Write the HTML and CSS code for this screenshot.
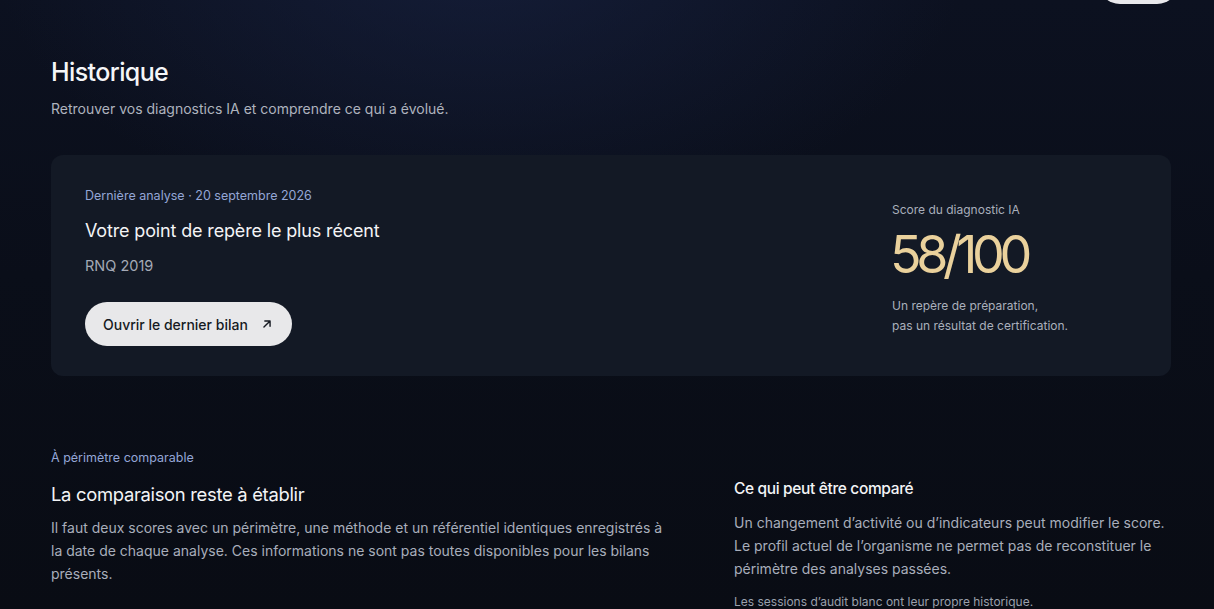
FILE: index.html
```html
<!DOCTYPE html>
<html lang="fr">
<head>
<meta charset="utf-8">
<title>Historique</title>
<link rel="stylesheet" href="styles.css">
</head>
<body>
<div class="page">
  <header class="topbar">
    <button class="top-btn" type="button" aria-label="Compte"></button>
  </header>
  <main class="wrap">
    <section class="intro">
      <h1 class="title">Historique</h1>
      <p class="subtitle">Retrouver vos diagnostics IA et comprendre ce qui a évolué.</p>
    </section>

    <section class="card">
      <div class="card-main">
        <p class="eyebrow">Dernière analyse · 20 septembre 2026</p>
        <h2 class="card-title">Votre point de repère le plus récent</h2>
        <p class="card-ref">RNQ 2019</p>
        <a class="btn" href="#">Ouvrir le dernier bilan
          <svg class="btn-icon" viewBox="0 0 16 16" width="14" height="14" aria-hidden="true"><path d="M4.5 11.5 11.5 4.5M5.5 4.5h6v6" fill="none" stroke="currentColor" stroke-width="1.6" stroke-linecap="round" stroke-linejoin="round"/></svg>
        </a>
      </div>
      <aside class="score">
        <p class="score-label">Score du diagnostic IA</p>
        <p class="score-value">58/100</p>
        <p class="score-note">Un repère de préparation,<br>pas un résultat de certification.</p>
      </aside>
    </section>

    <section class="compare">
      <div class="compare-left">
        <p class="eyebrow">À périmètre comparable</p>
        <h2 class="compare-title">La comparaison reste à établir</h2>
        <p class="body-text">Il faut deux scores avec un périmètre, une méthode et un référentiel identiques enregistrés à la date de chaque analyse. Ces informations ne sont pas toutes disponibles pour les bilans présents.</p>
      </div>
      <div class="compare-right">
        <h3 class="side-title">Ce qui peut être comparé</h3>
        <p class="body-text">Un changement d’activité ou d’indicateurs peut modifier le score. Le profil actuel de l’organisme ne permet pas de reconstituer le périmètre des analyses passées.</p>
        <p class="small-note">Les sessions d’audit blanc ont leur propre historique.</p>
      </div>
    </section>
  </main>
</div>
</body>
</html>
```

FILE: styles.css
```css
* { box-sizing: border-box; }
html, body {
  margin: 0;
  padding: 0;
  height: 100%;
}
body {
  font-family: Inter, "Noto Sans", "Liberation Sans", sans-serif;
  color: #f2f3f5;
  background: #090c14;
  overflow: hidden;
}
.page {
  min-height: 100%;
  background:
    radial-gradient(ellipse 700px 420px at 480px -60px, rgba(24, 34, 66, 0.7), rgba(24, 34, 66, 0) 70%),
    linear-gradient(180deg, #0c1120 0%, #0a0e19 45%, #090c14 100%);
}
.topbar {
  display: flex;
  justify-content: flex-end;
  padding: 0 35px 0 0;
  height: 0;
}
.top-btn {
  margin-top: -40px;
  width: 81px;
  height: 44px;
  border: none;
  border-radius: 22px;
  background: #e9e9ec;
}
.wrap {
  width: 1120px;
  margin: 0 0 0 51px;
  padding-top: 56px;
}
.intro { margin-bottom: 36px; }
.title {
  margin: 0;
  font-size: 25px;
  font-weight: 500;
  letter-spacing: -0.6px;
  line-height: 32px;
  color: #f5f6f8;
}
.subtitle {
  margin: 11px 0 0;
  font-size: 14px;
  line-height: 20px;
  color: #aeb3be;
}
.card {
  display: flex;
  justify-content: space-between;
  align-items: flex-start;
  background: #131925;
  border-radius: 12px;
  padding: 32px 34px 29px 34px;
  height: 221px;
}
.eyebrow {
  margin: 0;
  font-size: 12.5px;
  line-height: 18px;
  color: #94a6d6;
}
.card-title {
  margin: 13px 0 0;
  font-size: 18px;
  font-weight: 400;
  letter-spacing: -0.15px;
  line-height: 26px;
  color: #f3f4f6;
}
.card-ref {
  margin: 12px 0 0;
  font-size: 14.5px;
  line-height: 20px;
  color: #a4aab6;
}
.btn {
  margin-top: 26px;
  display: inline-flex;
  align-items: center;
  gap: 12px;
  height: 44px;
  padding: 0 18px 0 18px;
  border-radius: 22px;
  background: #e8e8ea;
  color: #161a22;
  font-size: 14px;
  font-weight: 500;
  text-decoration: none;
}
.btn-icon { display: block; }
.score {
  width: 245px;
  margin-top: 14px;
}
.score-label {
  margin: 0;
  font-size: 12px;
  line-height: 18px;
  color: #a9afbb;
}
.score-value {
  margin: 8px 0 0 -2px;
  font-size: 52px;
  font-weight: 400;
  letter-spacing: -5.4px;
  line-height: 56px;
  color: #ead19c;
}
.score-note {
  margin: 13px 0 0;
  font-size: 12px;
  line-height: 20px;
  color: #aab0bc;
}
.compare {
  display: grid;
  grid-template-columns: 619px 437px;
  gap: 64px;
  padding-top: 73px;
}
.compare-title {
  margin: 14px 0 0;
  font-size: 18.4px;
  font-weight: 400;
  letter-spacing: -0.3px;
  line-height: 26px;
  color: #f3f4f6;
}
.body-text {
  margin: 9px 0 0;
  font-size: 14px;
  line-height: 23px;
  color: #a8aebb;
}
.compare-right { padding-top: 29px; }
.side-title {
  margin: 0;
  font-size: 15.5px;
  font-weight: 500;
  letter-spacing: -0.35px;
  line-height: 22px;
  color: #f3f4f6;
}
.compare-right .body-text { margin-top: 11px; }
.small-note {
  margin: 13px 0 0;
  font-size: 12px;
  line-height: 18px;
  color: #9aa0ac;
}
```
